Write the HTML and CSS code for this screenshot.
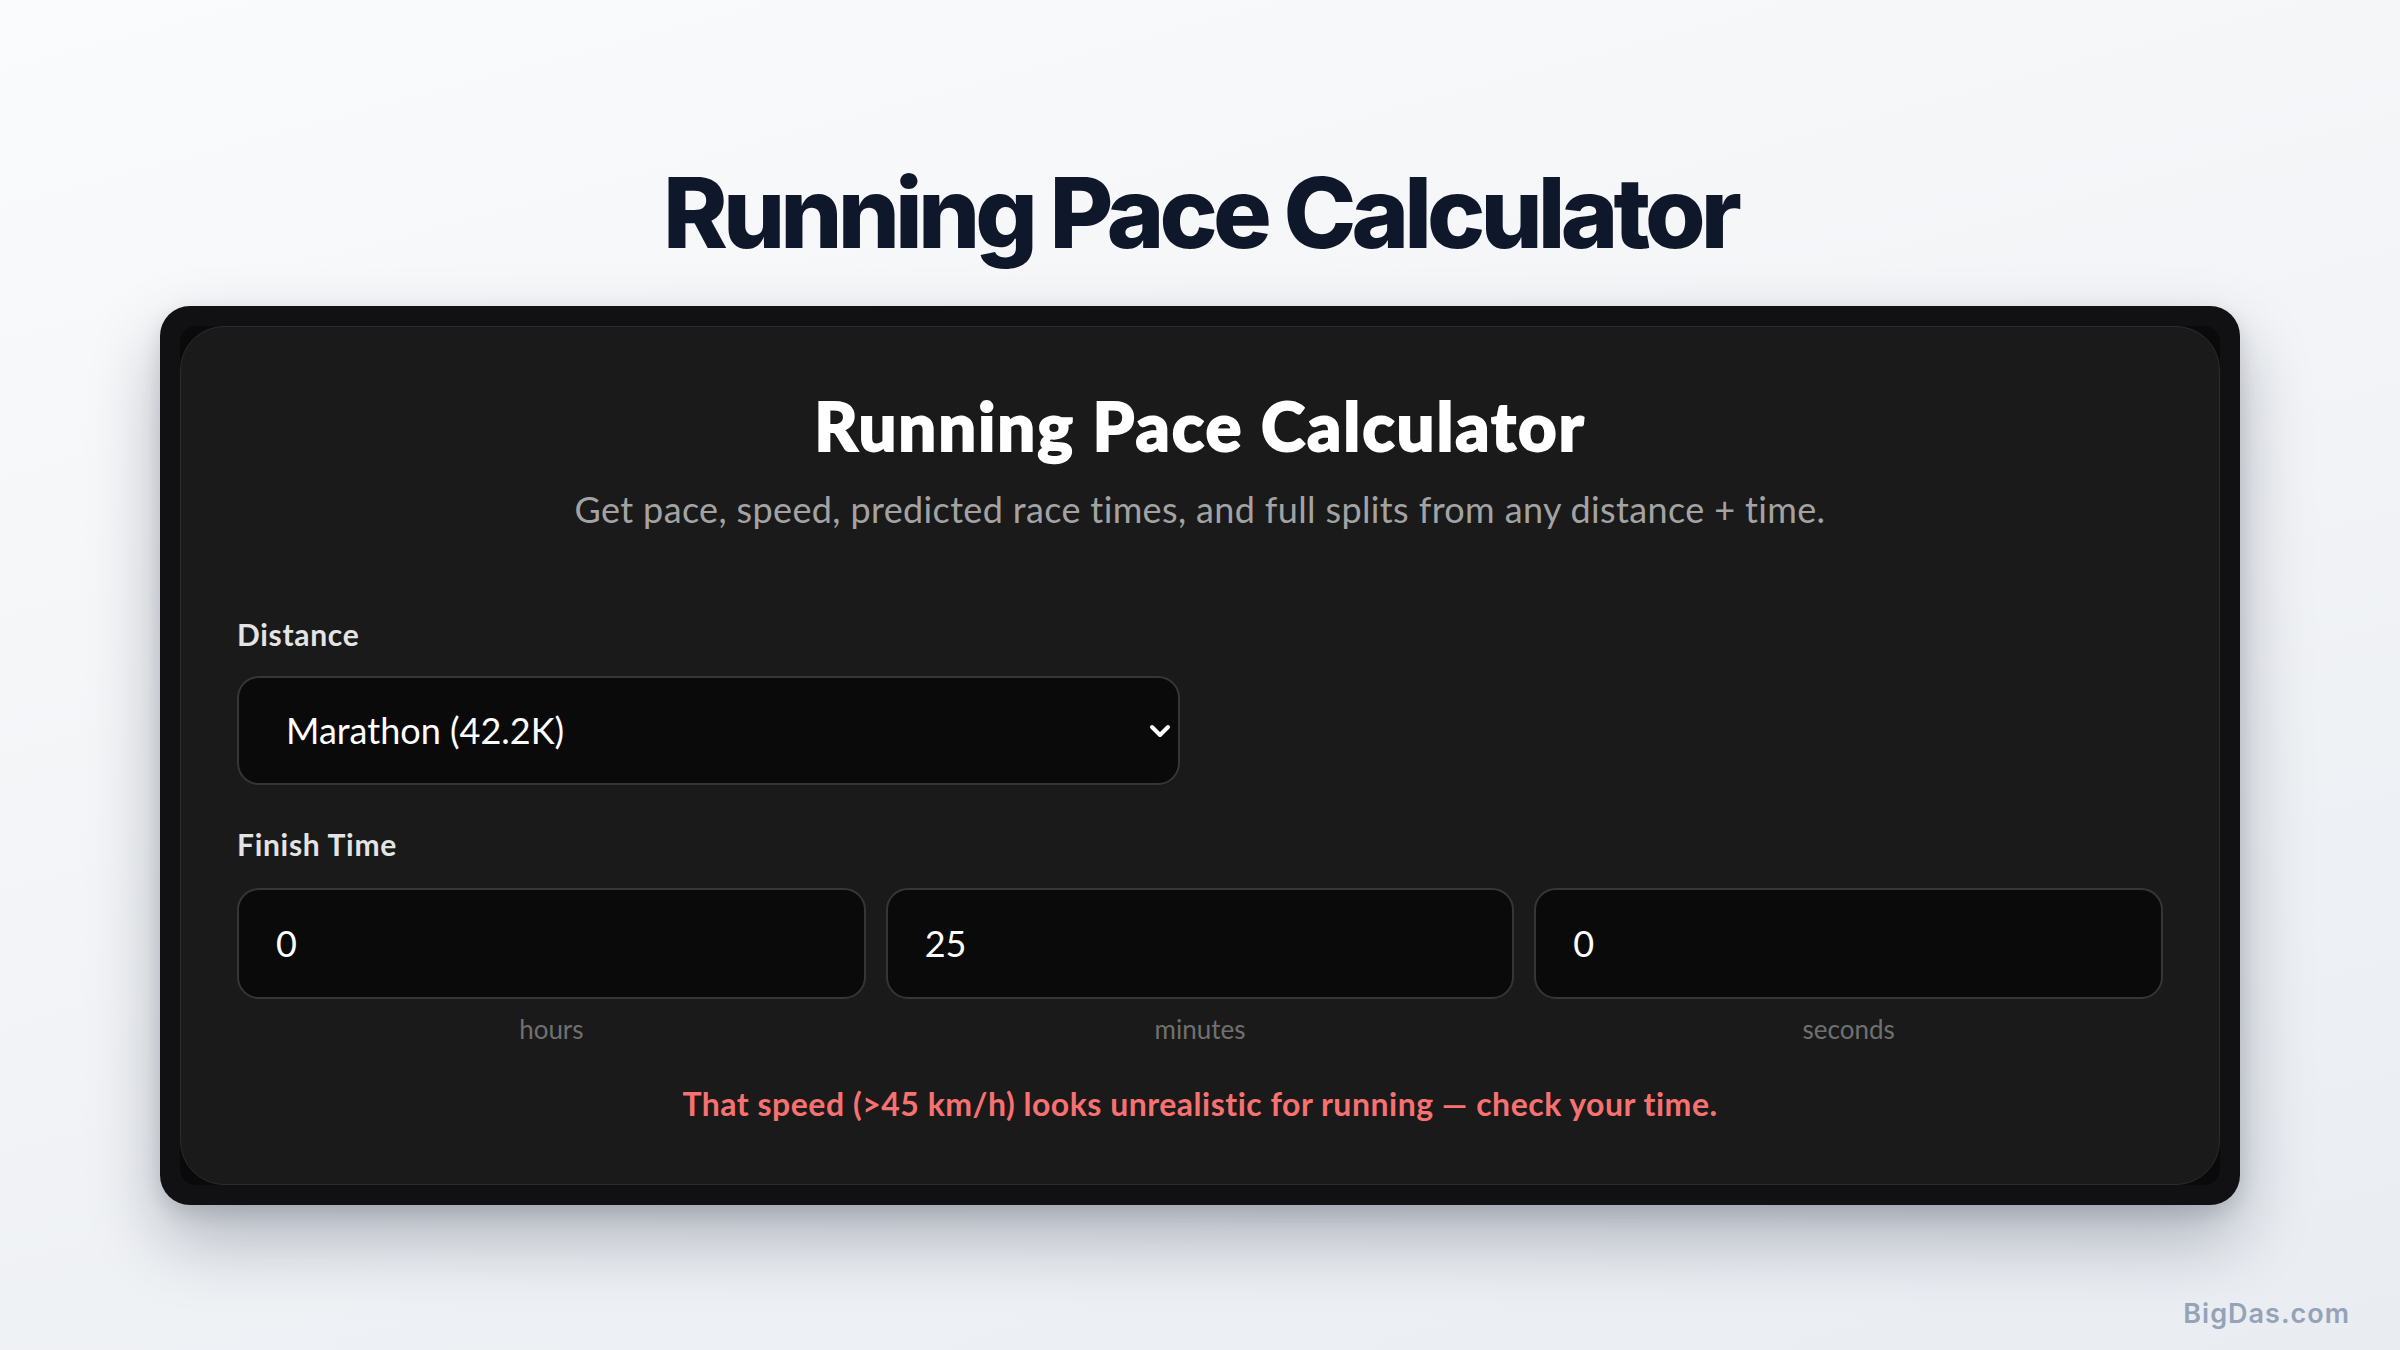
FILE: index.html
```html
<!DOCTYPE html>
<html lang="en">
<head>
<meta charset="utf-8">
<title>Running Pace Calculator</title>
<link rel="stylesheet" href="styles.css">
</head>
<body>
<main class="page">
  <h1 class="page-title">Running Pace Calculator</h1>
  <section class="frame">
    <div class="frame-inner">
      <div class="card">
        <h2 class="card-title">Running Pace Calculator</h2>
        <p class="card-sub">Get pace, speed, predicted race times, and full splits from any distance + time.</p>

        <div class="field distance-field">
          <label class="field-label" for="distance">Distance</label>
          <div class="select-wrap">
            <select id="distance" class="select">
              <option>Marathon (42.2K)</option>
            </select>
            <svg class="chevron" viewBox="0 0 22 14" width="22" height="14" aria-hidden="true">
              <polyline points="3,3 11,11 19,3" fill="none" stroke="#fff" stroke-width="4" stroke-linecap="round" stroke-linejoin="round"/>
            </svg>
          </div>
        </div>

        <div class="field">
          <label class="field-label">Finish Time</label>
          <div class="time-grid">
            <div class="time-col">
              <input class="input" type="text" value="0">
              <span class="unit">hours</span>
            </div>
            <div class="time-col">
              <input class="input" type="text" value="25">
              <span class="unit">minutes</span>
            </div>
            <div class="time-col">
              <input class="input" type="text" value="0">
              <span class="unit">seconds</span>
            </div>
          </div>
        </div>

        <p class="error">That speed (&gt;45 km/h) looks unrealistic for running — check your time.</p>
      </div>
    </div>
  </section>
</main>
<div class="watermark">BigDas.com</div>
</body>
</html>
```

FILE: styles.css
```css
* { box-sizing: border-box; }

html, body {
  margin: 0;
  padding: 0;
}

body {
  width: 2400px;
  height: 1350px;
  overflow: hidden;
  position: relative;
  background: linear-gradient(165deg, #fafbfc 0%, #f1f3f6 55%, #e9edf2 100%);
  font-family: Lato, "Noto Sans", sans-serif;
}

.page {
  display: flex;
  flex-direction: column;
  align-items: center;
  padding-top: 164px;
}

.page-title {
  margin: 0;
  font-family: Inter, sans-serif;
  font-weight: 800;
  font-size: 98px;
  line-height: 1;
  letter-spacing: -0.05em;
  color: #0f172a;
}

.frame {
  margin-top: 44px;
  width: 2080px;
  padding: 20px;
  background: #111113;
  border-radius: 30px;
  box-shadow: 0 34px 70px rgba(15, 23, 42, 0.28), 0 8px 20px rgba(15, 23, 42, 0.12);
}

.frame-inner {
  background: #0a0a0a;
  border-radius: 16px;
}

.card {
  background: #1a1a1a;
  border: 1px solid #2c2c2c;
  border-radius: 44px;
  padding: 58px 56px 61px;
  display: flex;
  flex-direction: column;
}

.card-title {
  margin: 0;
  text-align: center;
  font-family: Lato, sans-serif;
  font-weight: 900;
  font-size: 67px;
  line-height: 1.2;
  letter-spacing: 1.9px;
  -webkit-text-stroke: 1.8px #ffffff;
  color: #ffffff;
}

.card-sub {
  margin: 23px 0 0;
  text-align: center;
  font-size: 36px;
  line-height: 1.2;
  letter-spacing: 0.36px;
  color: #a3a3a3;
}

.field {
  display: flex;
  flex-direction: column;
}

.distance-field {
  margin-top: 84px;
  width: 943px;
}

.distance-field + .field {
  margin-top: 41px;
}

.field-label {
  font-weight: 700;
  font-size: 30px;
  line-height: 1.2;
  letter-spacing: 0.7px;
  color: #e4e4e4;
  margin-bottom: 24px;
}

.select-wrap {
  position: relative;
}

.select {
  appearance: none;
  -webkit-appearance: none;
  width: 100%;
  height: 109px;
  padding: 0 60px 0 47px;
  background: #0a0a0a;
  border: 2px solid #363636;
  border-radius: 22px;
  color: #ffffff;
  font-family: Lato, sans-serif;
  font-size: 36px;
  outline: none;
}

.chevron {
  position: absolute;
  right: 9px;
  top: 48px;
}

.time-grid {
  display: grid;
  grid-template-columns: repeat(3, 1fr);
  column-gap: 20px;
  margin-top: 2px;
}

.time-col {
  display: flex;
  flex-direction: column;
  align-items: center;
}

.input {
  width: 100%;
  height: 111px;
  padding: 0 37px;
  background: #0a0a0a;
  border: 2px solid #363636;
  border-radius: 22px;
  color: #ffffff;
  font-family: Lato, sans-serif;
  font-size: 36px;
  outline: none;
}

.unit {
  margin-top: 15px;
  font-size: 26px;
  line-height: 1.2;
  color: #707070;
}

.error {
  margin: 40px 0 0;
  text-align: center;
  font-weight: 700;
  font-size: 32px;
  line-height: 1.2;
  letter-spacing: 0.5px;
  color: #f87171;
}

.watermark {
  position: absolute;
  right: 50px;
  bottom: 20px;
  font-family: Inter, sans-serif;
  font-weight: 600;
  font-size: 27px;
  letter-spacing: 1px;
  color: #94a3b8;
}
```
